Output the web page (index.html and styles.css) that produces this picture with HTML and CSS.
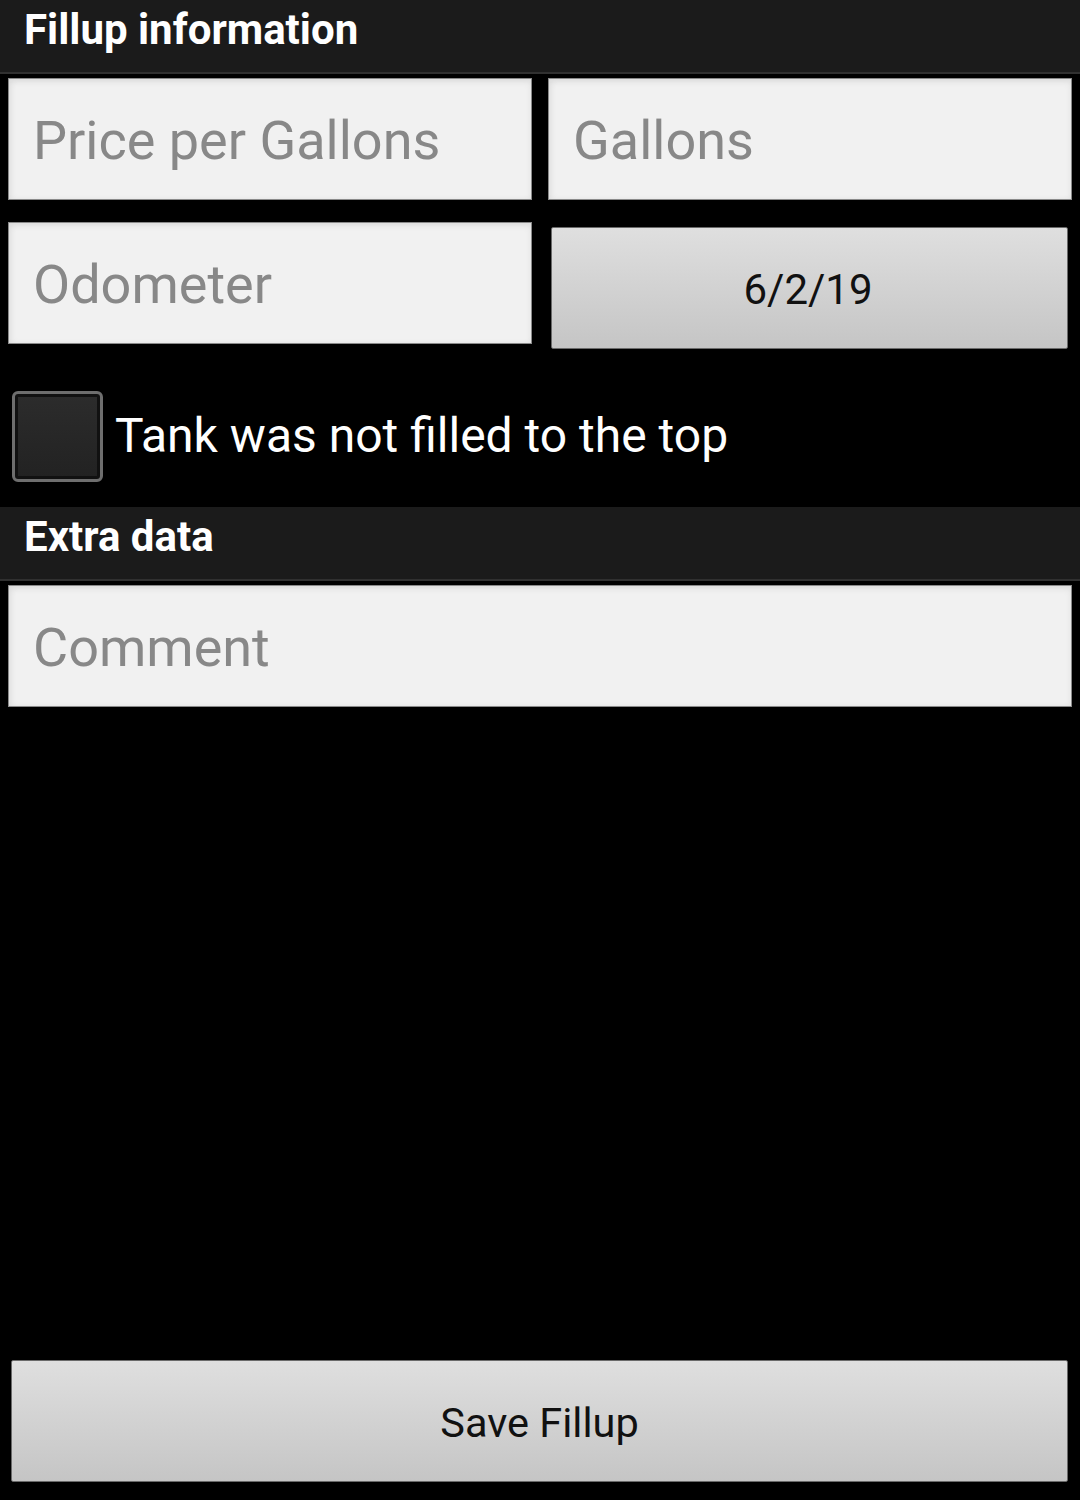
FILE: index.html
```html
<!DOCTYPE html>
<html>
<head>
<meta charset="utf-8">
<link rel="stylesheet" href="styles.css">
</head>
<body>
<div class="screen">
  <div class="section-header">Fillup information</div>
  <div class="grid">
    <div class="field"><span class="placeholder">Price per Gallons</span></div>
    <div class="field"><span class="placeholder">Gallons</span></div>
    <div class="field"><span class="placeholder">Odometer</span></div>
    <div class="date-cell"><div class="button date-button">6/2/19</div></div>
  </div>
  <div class="check-row">
    <div class="checkbox"></div>
    <div class="check-label">Tank was not filled to the top</div>
  </div>
  <div class="section-header">Extra data</div>
  <div class="single">
    <div class="field"><span class="placeholder">Comment</span></div>
  </div>
  <div class="save-row">
    <div class="button save-button">Save Fillup</div>
  </div>
</div>
</body>
</html>
```

FILE: styles.css
```css
html, body {
  margin: 0;
  padding: 0;
  background: #000;
}
.screen {
  height: 1500px;
  display: flex;
  flex-direction: column;
  font-family: Roboto, "Liberation Sans", sans-serif;
  background: #000;
}
.section-header {
  box-sizing: border-box;
  background: #1b1b1b;
  border-bottom: 2px solid #303030;
  height: 74px;
  color: #fff;
  font-weight: bold;
  font-size: 42px;
  line-height: 60px;
  padding-left: 24px;
}
.grid {
  display: grid;
  grid-template-columns: 1fr 1fr;
  column-gap: 16px;
  row-gap: 22px;
  padding: 4px 8px 0 8px;
}
.field {
  height: 122px;
  box-sizing: border-box;
  background: #f1f1f1;
  border: 1px solid #8a8a8a;
  box-shadow: inset 0 3px 6px rgba(0,0,0,0.07), inset 3px 0 6px rgba(0,0,0,0.04);
  display: flex;
  align-items: center;
  padding-left: 24px;
  padding-top: 3px;
}
.placeholder {
  color: #888;
  font-size: 54px;
  line-height: 1;
}
.date-cell {
  padding: 5px 4px 0 3px;
}
.button {
  box-sizing: border-box;
  height: 122px;
  background: linear-gradient(#dfdfdf, #c5c5c5);
  border: 1px solid #6a6a6a;
  border-radius: 2px;
  display: flex;
  align-items: center;
  justify-content: center;
  color: #111;
}
.date-button {
  font-size: 42px;
  padding-top: 2px;
  padding-right: 3px;
}
.check-row {
  display: flex;
  align-items: center;
  padding: 0 0 0 12px;
  margin-top: 42px;
  height: 91px;
  margin-bottom: 25px;
}
.checkbox {
  width: 91px;
  height: 91px;
  box-sizing: border-box;
  border: 3px solid #6e6e6e;
  border-radius: 6px;
  background: linear-gradient(#2c2c2c, #222);
  box-shadow: inset 0 0 0 3px #111;
}
.check-label {
  color: #fff;
  font-size: 48px;
  margin-left: 12px;
  padding-bottom: 2px;
}
.single {
  padding: 4px 8px 0 8px;
}
.save-row {
  margin-top: auto;
  padding: 0 12px 18px 11px;
}
.save-button {
  font-size: 41.5px;
  padding-top: 2px;
}
```
